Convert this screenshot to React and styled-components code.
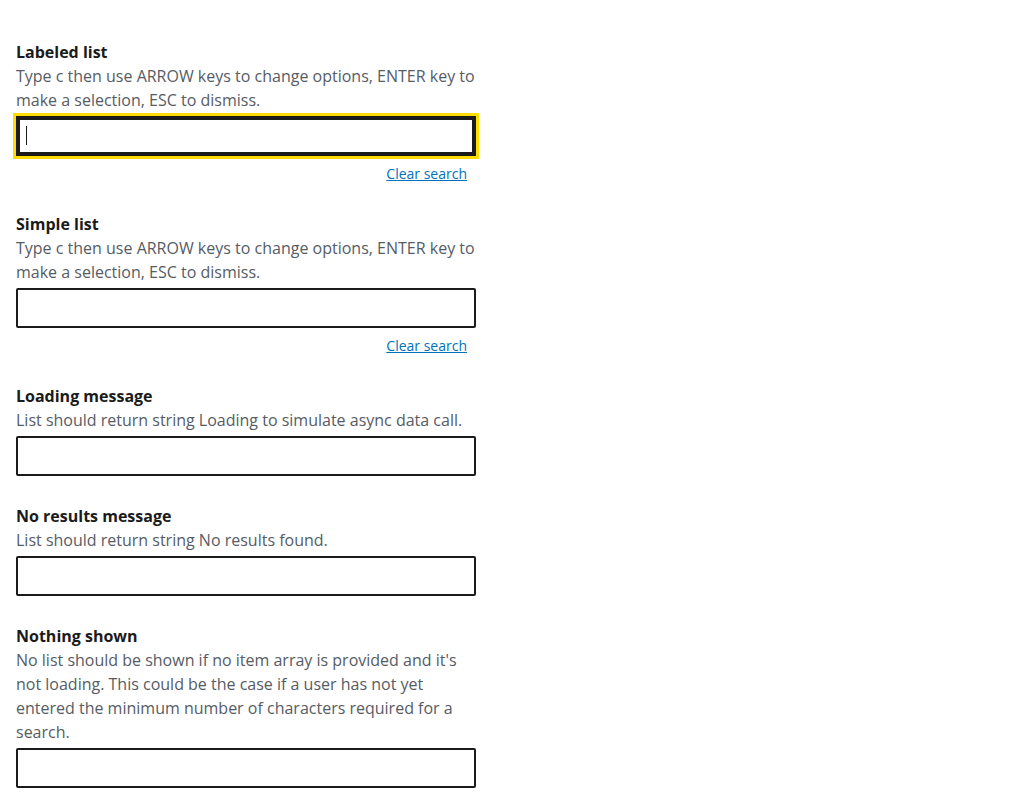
import React from "react";
import styled, { createGlobalStyle } from "styled-components";

const GlobalStyle = createGlobalStyle`
  body {
    margin: 0;
    background: #ffffff;
    font-family: "Open Sans", "Liberation Sans", sans-serif;
  }
`;

const Page = styled.main`
  padding: 40px 16px;
  width: 460px;
  display: flex;
  flex-direction: column;
  gap: 28px;
`;

const Field = styled.div`
  display: flex;
  flex-direction: column;
`;

const Label = styled.label`
  font-size: 16px;
  line-height: 24px;
  font-weight: 700;
  color: #1b1b1b;
`;

const Hint = styled.p`
  margin: 0 0 4px;
  font-size: 16px;
  line-height: 24px;
  color: #565c65;
`;

const InputWrap = styled.div`
  position: relative;
  height: 40px;
`;

const Input = styled.input`
  box-sizing: border-box;
  width: 100%;
  height: 40px;
  margin: 0;
  padding: 0 8px;
  border: 2px solid #1b1b1b;
  background: #fff;
  font: inherit;
  font-size: 16px;
  caret-color: transparent;
  outline: ${(p) => (p.$focused ? "3px solid #ffdd00" : "none")};
  box-shadow: ${(p) => (p.$focused ? "inset 0 0 0 2px #1b1b1b" : "none")};
  border-radius: ${(p) => (p.$focused ? "0" : "2px")};
`;

const Caret = styled.span`
  position: absolute;
  left: 10px;
  top: 10px;
  width: 1px;
  height: 19px;
  background: #1b1b1b;
`;

const LinkRow = styled.div`
  display: flex;
  justify-content: flex-end;
  padding: 8px 9px 0 0;
`;

const ClearLink = styled.a`
  font-size: 14px;
  line-height: 20px;
  color: #0071bc;
  text-decoration: underline;
`;

const fields = [
  {
    label: "Labeled list",
    hint: "Type c then use ARROW keys to change options, ENTER key to make a selection, ESC to dismiss.",
    clear: true,
    focused: true,
  },
  {
    label: "Simple list",
    hint: "Type c then use ARROW keys to change options, ENTER key to make a selection, ESC to dismiss.",
    clear: true,
  },
  {
    label: "Loading message",
    hint: "List should return string Loading to simulate async data call.",
  },
  {
    label: "No results message",
    hint: "List should return string No results found.",
  },
  {
    label: "Nothing shown",
    hint: "No list should be shown if no item array is provided and it's not loading. This could be the case if a user has not yet entered the minimum number of characters required for a search.",
  },
];

export default function App() {
  return (
    <>
      <GlobalStyle />
      <Page>
        {fields.map((f, i) => (
          <Field key={f.label}>
            <Label htmlFor={`field-${i}`}>{f.label}</Label>
            <Hint>{f.hint}</Hint>
            <InputWrap>
              <Input id={`field-${i}`} type="text" $focused={f.focused} />
              {f.focused && <Caret />}
            </InputWrap>
            {f.clear && (
              <LinkRow>
                <ClearLink href="#">Clear search</ClearLink>
              </LinkRow>
            )}
          </Field>
        ))}
      </Page>
    </>
  );
}
